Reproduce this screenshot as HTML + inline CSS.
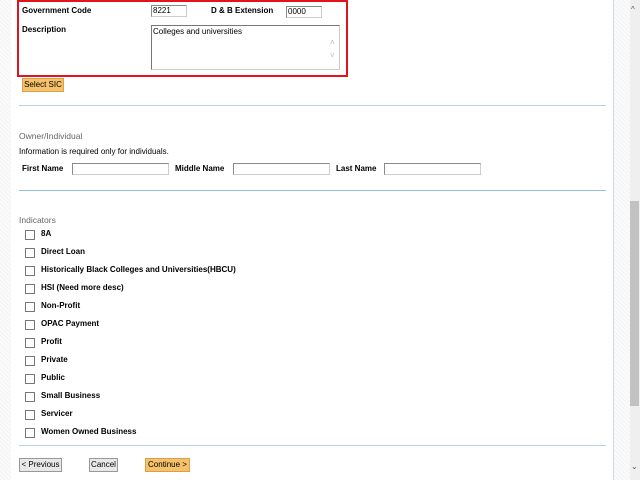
<!DOCTYPE html>
<html><head><style>
body{margin:0;width:640px;height:480px;overflow:hidden;position:relative;background:#fff;font-family:"Liberation Sans",sans-serif;font-size:8px;color:#000}
.hatch{position:absolute;top:0;height:480px;background:repeating-linear-gradient(45deg,#f3f3f3 0 1px,#fbfbfb 1px 3px)}
.a{position:absolute;white-space:nowrap}
.b{font-weight:bold;margin-top:1px}
.in{position:absolute;height:10px;border:1px solid #8a8a8a;border-right-color:#ccc;border-bottom-color:#ccc;background:#fff;font-size:8px;line-height:10px;padding-left:1px;box-sizing:content-box;white-space:nowrap}
.hr{position:absolute;left:19px;width:587px;height:1px;background:#b4d2f0}
.cb{position:absolute;left:25px;width:8px;height:8px;border:1px solid #777;background:#fff}
.btn{position:absolute;height:12px;border:1px solid #999;background:#e8e8e8;font-size:8px;line-height:12px;text-align:center;white-space:nowrap;overflow:hidden}
.gray{color:#666;font-size:8.5px;margin-top:1px}
</style></head><body>
<div class="hatch" style="left:0;width:11px"></div>
<div class="hatch" style="left:614px;width:16px"></div>
<div class="a" style="left:613px;top:0;width:1px;height:480px;background:#cfdbe6"></div>
<div class="a" style="left:630px;top:0;width:10px;height:480px;background:#efefef"></div>
<div class="a" style="left:630px;top:201px;width:9px;height:205px;background:#c2c2c2"></div>
<div class="a" style="left:631px;top:5px;font-size:8px;color:#555">&#94;</div>
<div class="a" style="left:631px;top:462px;font-size:8px;color:#555">&#8964;</div>

<div class="a" style="left:17px;top:0;width:327px;height:73px;border:2px solid #e0141c"></div>
<div class="a b" style="left:22px;top:5px">Government Code</div>
<div class="in" style="left:151px;top:5px;width:33px">8221</div>
<div class="a b" style="left:211px;top:5px">D &amp; B Extension</div>
<div class="in" style="left:286px;top:6px;width:33px">0000</div>
<div class="a b" style="left:22px;top:24px">Description</div>
<div class="in" style="left:151px;top:25px;width:186px;height:43px;line-height:11px;border-color:#777 #ccc #ccc #777">Colleges and universities</div>
<div class="a" style="left:330px;top:38px;color:#bbb;font-size:8px">&#708;</div>
<div class="a" style="left:330px;top:51px;color:#bbb;font-size:8px">&#709;</div>
<div class="btn" style="left:22px;top:78px;width:40px;background:#f5c26b;border-color:#d9a04a">Select SIC</div>

<div class="hr" style="top:105px"></div>
<div class="a gray" style="left:19px;top:130px">Owner/Individual</div>
<div class="a" style="left:19px;top:147px">Information is required only for individuals.</div>
<div class="a b" style="left:22px;top:163px">First Name</div>
<div class="in" style="left:72px;top:163px;width:94px"></div>
<div class="a b" style="left:175px;top:163px">Middle Name</div>
<div class="in" style="left:233px;top:163px;width:94px"></div>
<div class="a b" style="left:336px;top:163px">Last Name</div>
<div class="in" style="left:384px;top:163px;width:94px"></div>
<div class="hr" style="top:190px;background:#8fc0ea"></div>

<div class="a gray" style="left:19px;top:214px">Indicators</div>
<div class="cb" style="top:230px"></div><div class="a b" style="left:41px;top:228px">8A</div>
<div class="cb" style="top:248px"></div><div class="a b" style="left:41px;top:246px">Direct Loan</div>
<div class="cb" style="top:266px"></div><div class="a b" style="left:41px;top:264px">Historically Black Colleges and Universities(HBCU)</div>
<div class="cb" style="top:284px"></div><div class="a b" style="left:41px;top:282px">HSI (Need more desc)</div>
<div class="cb" style="top:302px"></div><div class="a b" style="left:41px;top:300px">Non-Profit</div>
<div class="cb" style="top:320px"></div><div class="a b" style="left:41px;top:318px">OPAC Payment</div>
<div class="cb" style="top:338px"></div><div class="a b" style="left:41px;top:336px">Profit</div>
<div class="cb" style="top:356px"></div><div class="a b" style="left:41px;top:354px">Private</div>
<div class="cb" style="top:374px"></div><div class="a b" style="left:41px;top:372px">Public</div>
<div class="cb" style="top:392px"></div><div class="a b" style="left:41px;top:390px">Small Business</div>
<div class="cb" style="top:410px"></div><div class="a b" style="left:41px;top:408px">Servicer</div>
<div class="cb" style="top:428px"></div><div class="a b" style="left:41px;top:426px">Women Owned Business</div>
<div class="hr" style="top:445px"></div>

<div class="btn" style="left:19px;top:458px;width:41px">&lt; Previous</div>
<div class="btn" style="left:89px;top:458px;width:27px">Cancel</div>
<div class="btn" style="left:145px;top:458px;width:43px;background:#f5c26b;border-color:#d9a04a">Continue &gt;</div>
</body></html>
